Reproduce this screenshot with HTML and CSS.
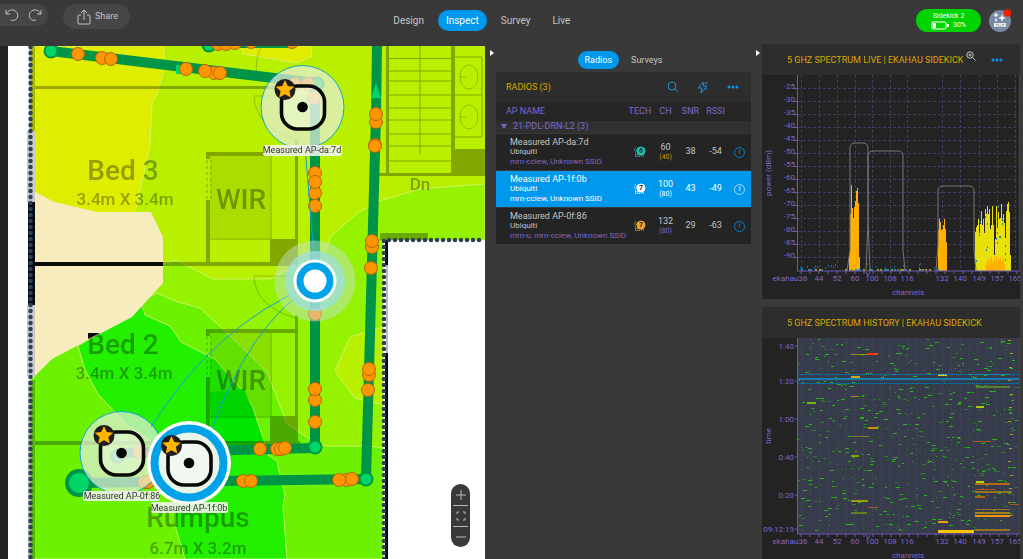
FILE: index.html
```html
<!DOCTYPE html>
<html lang="en">
<head>
<meta charset="utf-8">
<title>Inspect</title>
<link rel="stylesheet" href="styles.css">
</head>
<body>
<header class="topbar">
  <div class="tools">
    <div class="history">
      <button class="icon-btn" aria-label="Undo"><svg width="14" height="14" viewBox="0 0 14 14"><path d="M1 2v4h4M1.300 5.800C3 2.500 6 1.200 9 2.200c5 2 5 9 0 10-1 .3-2 .2-3-.2"/></svg></button>
      <button class="icon-btn" aria-label="Redo"><svg width="14" height="14" viewBox="0 0 14 14"><path d="M13 2v4H9M12.700 5.800C11 2.500 8 1.200 5 2.200c-5 2-5 9 0 10 1 .3 2 .2 3-.2"/></svg></button>
    </div>
    <button class="share"><svg width="14" height="16" viewBox="0 0 14 16"><path d="M4 6H2q-1 0-1 1v7q0 1 1 1h10q1 0 1-1V7q0-1-1-1h-2M7 11V1M4 4l3-3 3 3"/></svg>Share</button>
  </div>
  <nav class="modes">
    <a href="#design">Design</a>
    <a href="#inspect" class="active">Inspect</a>
    <a href="#survey">Survey</a>
    <a href="#live">Live</a>
  </nav>
  <div class="status">
    <button class="sidekick"><span>Sidekick 2</span><span class="charge"><svg width="18" height="9" viewBox="0 0 18 9"><rect x="1" y="1" width="14" height="7" rx="1" fill="none" stroke="#fff"/><path d="M2 2h3v5H2zM16 3h2v3h-2z" fill="#fff"/></svg>30%</span></button>
    <button class="avatar" aria-label="Account"><svg width="24" height="24" viewBox="0 0 24 24"><circle cx="12" cy="13" r="11" fill="#7889a3"/><path d="M8 4l.8 2.200 2.200.8-2.200.8L8 10l-.8-2.200L5 7l2.200-.8zM14 6l1 3 3 1-3 1-1 3-1-3-3-1 3-1zM8 10l.6 1.400 1.400.6-1.400.6L8 14l-.6-1.400L6 12l1.400-.6z" fill="#fff"/><path d="M6 15h12v4H6z" fill="#e8e8e8"/><path d="M8 16.500h3M14 16.500h3M8 18h8" stroke="#9aa5b3" stroke-width=".7"/><circle cx="19.500" cy="5" r="3.700" fill="#f51c00"/></svg></button>
  </div>
</header>
<main class="workspace">
  <section class="map" aria-label="Floor plan">
    <svg class="plan" viewBox="8 46 477 513" preserveAspectRatio="xMinYMin slice">
      <defs>
        <g id="ap">
          <rect x="-21" y="-21" width="43" height="43" rx="16" fill="#fff" fill-opacity=".35" stroke="#080808" stroke-width="3.600"/>
          <circle r="5.300" fill="#050505"/>
          <circle cx="-17.500" cy="-17.500" r="10.500" fill="#201d1c"/>
          <path fill="#ffb400" d="M-17.500-27l2.800 6 6.500.7-4.900 4.400 1.400 6.500-5.800-3.300-5.800 3.300 1.400-6.500-4.900-4.400 6.500-.7z"/>
        </g>
      </defs>
      <rect x="8" y="46" width="477" height="513" fill="#fff"/>
      <path fill="#b9f000" d="M31 46H485V240H383V559H31z"/>
      <path class="zone" fill="#dfee00" d="M31 46H164V70L158 92 152 103 150 146 135 213H97L54 202 31 190z"/>
      <path class="zone" fill="#dfee00" d="M240 46l3 8 53 9 15-6 1-11z"/>
      <path class="zone" fill="#95f200" d="M163 264l13-4 37 19h57l55-27 6-16 27-23 21-12 41-12 65-5V240H383V559H31V380z"/>
      <path class="zone" fill="#b9f000" d="M383 327l-33 10-15 34 20 27 28 7z"/>
      <path class="zone" fill="#6cf200" d="M157 293l18 8 25 7 40 37 27 27 20 52 23 15 15 7h45l13 2V559H31V360z"/>
      <path class="zone" fill="#23f000" d="M142 306l3 9 25 11 11 16 34 17 25 29 13 19 12 38 3 10 9 6 3 14 5 20-2 11 4 53H185l-9-30-1-30-25-59-23-15-29-31-13-24-7-24z"/>
      <path fill="#00e600" d="M210 392l34-3 8 20 12 33-52 2z"/>
      <path fill="#f6ecbe" d="M31 190l23 12 43 10h54l12 25v46l-31 34-80 42-21 21z"/>
      <g class="floor">
        <path d="M29 46h6v85h-6zM28 380h7v179h-7z" opacity=".8"/>
        <path d="M35 86h244v3H35zM163 262h130v4H163zM35 441h265v4H35zM206 152h89v4h-89zM206 152h4v7h-4zM206 200h4v63h-4zM295 140h3v125h-3zM206 329h90v4h-90zM206 329h4v7h-4zM206 377h4v66h-4zM295 315h3v128h-3zM386 46h3v128h-3zM451 46h4v128h-4zM378 173h107v3H378z"/>
        <path d="M270 239h28v25h-28zM270 416h28v26h-28zM452 149h33v25h-33zM380 233h48v7h-48z"/>
        <path fill="none" stroke="#000" d="M208 239h62M208 417h62M389 58.500h62M389 71h62M389 81h62M389 95h62M389 108h62M389 120h62M389 134h62M389 146h62M389 161h62M420 46v108M454 57h28v80h-28zM454 95h28M271 156v108M271 333v109"/>
        <path fill="none" stroke="#000" stroke-dasharray="3 3" d="M207 160v40M207 336v40M211 160v40M211 336v40"/>
        <path d="M210 156h60v82h-60zM210 333h60v83h-60z" opacity=".25"/>
        <g fill="none" stroke="#000" stroke-width="1" opacity=".7"><ellipse cx="469" cy="77" rx="9" ry="12"/><ellipse cx="469" cy="117" rx="9" ry="12"/><path d="M459 77h8M459 117h8M254 96h42M254 97q2 30 42 43M254 276h42M254 277q2 30 42 41M262 46q-8 12-5 30"/></g>
      </g>
      <path d="M35 262h128v4H35zM28 202h7v103h-7zM88 333h12l-12 6z" fill="#080b0d"/>
      <path d="M27 131h8v71h-8zM27 305h8v71h-8z" fill="#c8c8c8"/>
      <path d="M385 240h3v25h-3zM385 353h3v206h-3z" fill="#080b0d"/><path d="M386 265h2v88h-2z" fill="#bbb"/>
      <path class="beads" d="M30.500 47V559M384 559V240H485"/>
      <g class="rooms">
        <text x="123" y="180" class="room">Bed 3</text><text x="125" y="205" class="size">3.4m X 3.4m</text>
        <text x="123" y="354" class="room">Bed 2</text><text x="124" y="379" class="size">3.4m X 3.4m</text>
        <text x="241" y="209" class="room">WIR</text><text x="241" y="390" class="room">WIR</text>
        <text x="198" y="527" class="room">Rumpus</text><text x="198" y="554" class="size">6.7m X 3.2m</text>
        <text x="420" y="190" class="size">Dn</text>
      </g>
      <path class="track" d="M51 51L315 83V448L122 453M210 43H295M377 46l-1 70-10 363-287 4"/>
      <g class="node" id="nodes"></g>
      <path d="M176 65h10v9h-10zM376 83l5 15h-10z" fill="#00d568"/>
      <g id="points" class="points"></g>
      <circle cx="79" cy="483" r="14" fill="#009447"/><circle cx="79" cy="483" r="10" fill="#00d568"/>
      <g class="range"><circle cx="302.500" cy="107" r="41.500"/><circle cx="121.500" cy="453" r="41.500"/></g>
      <path class="link" d="M310 286Q215 325 151 427M310 287Q250 325 211 431M305 146L315 270"/>
      <g fill="#c8dfe0"><circle cx="315" cy="281" r="40.500" opacity=".45"/><circle cx="315" cy="281" r="30" fill="#9fdfe0" opacity=".75"/></g>
      <circle cx="315" cy="281" r="21.500" fill="#fff"/><circle cx="315" cy="281" r="15" fill="#fff" stroke="#00a2e8" stroke-width="7"/>
      <circle cx="189" cy="463" r="42" fill="#fff"/><circle cx="189" cy="463" r="34.500" fill="#e9f5ea" stroke="#00a2e8" stroke-width="8"/>
      <use href="#ap" x="302.500" y="107"/><use href="#ap" x="121.500" y="453"/><use href="#ap" x="189" y="463"/>
      <g class="tag"><rect x="263" y="145" width="79" height="11" rx="2"/><text x="302" y="153">Measured AP-da:7d</text><rect x="83" y="491" width="77" height="10" rx="2"/><text x="122" y="499">Measured AP-0f:86</text><rect x="151" y="502" width="77" height="11" rx="2"/><text x="189" y="511">Measured AP-1f:0b</text></g>
    </svg>
    <div class="zoom">
      <button aria-label="Zoom in"><svg width="12" height="12" viewBox="0 0 12 12"><path d="M6 1v10M1 6h10"/></svg></button>
      <button aria-label="Fit"><svg width="12" height="12" viewBox="0 0 12 12"><path d="M2 4V2h2M8 2h2v2M10 8v2H8M4 10H2V8"/></svg></button>
      <button aria-label="Zoom out"><svg width="12" height="12" viewBox="0 0 12 12"><path d="M1 6h10"/></svg></button>
    </div>
  </section>
  <button class="fold" aria-label="Collapse radios"></button>
  <section class="radios">
    <div class="tabs"><button class="active">Radios</button><button>Surveys</button></div>
    <div class="card-head">
      <h2>RADIOS (3)</h2>
      <div class="actions">
        <button class="icon-btn" aria-label="Search"><svg width="12" height="12" viewBox="0 0 12 12"><circle cx="5" cy="5" r="4"/><path d="M8 8l3 3"/></svg></button>
        <button class="icon-btn" aria-label="Auto"><svg width="12" height="13" viewBox="0 0 12 13"><path d="M6 1L1 7h4l-1 5 6-7H6l1-4M8 2h3M8 8h2"/></svg></button>
        <button class="icon-btn more" aria-label="More"><svg width="12" height="4" viewBox="0 0 12 4"><circle cx="2" cy="2" r="1.500"/><circle cx="6" cy="2" r="1.500"/><circle cx="10" cy="2" r="1.500"/></svg></button>
      </div>
    </div>
    <table>
      <colgroup><col><col class="c-tech"><col class="c-num"><col class="c-num"><col class="c-num"><col class="c-info"></colgroup>
      <thead><tr><th class="name">AP NAME</th><th>TECH</th><th>CH</th><th>SNR</th><th>RSSI</th><th></th></tr></thead>
      <tbody>
        <tr class="group"><td colspan="6"><span class="caret"></span>21-PDL-DRN-L2 (3)</td></tr>
        <tr><td class="name"><b>Measured AP-da:7d</b><span>Ubiquiti</span><em>mrn-cciew, Unknown SSID</em></td><td><svg class="tech teal" viewBox="0 0 12 12"><path d="M1 2h2M0 4h3M1 6h3M1 8h6M1 10h10M2 8v3M5 8v3M8 9v2"/><circle cx="7" cy="5" r="4"/><text x="7" y="7">6</text></svg></td><td>60<small class="amber">(40)</small></td><td>38</td><td>-54</td><td><button class="info" aria-label="Details">i</button></td></tr>
        <tr class="selected"><td class="name"><b>Measured AP-1f:0b</b><span>Ubiquiti</span><em>mrn-cciew, Unknown SSID</em></td><td><svg class="tech white" viewBox="0 0 12 12"><path d="M1 2h2M0 4h3M1 6h3M1 8h6M1 10h10M2 8v3M5 8v3M8 9v2"/><circle cx="7" cy="5" r="4"/><text x="7" y="7">7</text></svg></td><td>100<small>(80)</small></td><td>43</td><td>-49</td><td><button class="info" aria-label="Details">i</button></td></tr>
        <tr><td class="name"><b>Measured AP-0f:86</b><span>Ubiquiti</span><em>mrn-u, mrn-cciew, Unknown SSID</em></td><td><svg class="tech gold" viewBox="0 0 12 12"><path d="M1 2h2M0 4h3M1 6h3M1 8h6M1 10h10M2 8v3M5 8v3M8 9v2"/><circle cx="7" cy="5" r="4"/><text x="7" y="7">7</text></svg></td><td>132<small>(80)</small></td><td>29</td><td>-63</td><td><button class="info" aria-label="Details">i</button></td></tr>
      </tbody>
    </table>
  </section>
  <button class="fold" aria-label="Collapse charts"></button>
  <section class="charts">
    <article class="chart">
      <div class="chart-head"><h2>5 GHZ SPECTRUM LIVE | EKAHAU SIDEKICK</h2>
        <button class="icon-btn grey" aria-label="Magnify"><svg width="10" height="10" viewBox="0 0 10 10"><circle cx="4" cy="4" r="3.200"/><path d="M6.500 6.500L9.500 9.500M2.500 4h3M4 2.500v3"/></svg></button>
        <button class="icon-btn more" aria-label="More"><svg width="12" height="4" viewBox="0 0 12 4"><circle cx="2" cy="2" r="1.500"/><circle cx="6" cy="2" r="1.500"/><circle cx="10" cy="2" r="1.500"/></svg></button>
      </div>
      <svg id="live" viewBox="762 75 258 224"></svg>
    </article>
    <article class="chart">
      <div class="chart-head"><h2>5 GHZ SPECTRUM HISTORY | EKAHAU SIDEKICK</h2></div>
      <svg id="past" viewBox="762 338 258 224"></svg>
    </article>
  </section>
</main>
<script src="charts.js"></script>
</body>
</html>
```
FILE: styles.css
```css
* { box-sizing: border-box; }
body { margin: 0; height: 100vh; display: flex; flex-direction: column; overflow: hidden; background: #393939; color: #c4c4c4; font: 9px/11px Roboto, sans-serif; }
button { padding: 0; border: 0; background: none; color: inherit; font: inherit; }
h2 { margin: 0; font: 9px/12px Roboto, sans-serif; color: #dba800; }
svg { display: block; }
.topbar { flex: none; height: 44px; display: grid; grid-template-columns: 13fr auto 15fr; }
.tools { display: flex; gap: 15px; padding-top: 4px; align-items: flex-start; }
.history { display: flex; gap: 9px; height: 22px; padding: 0 6px 0 5px; border-radius: 0 11px 11px 0; background: #464646; align-items: center; }
.icon-btn svg, .share svg, .zoom svg { fill: none; stroke: currentColor; stroke-width: 1; }
.share { display: flex; align-items: center; gap: 4px; height: 25px; padding: 0 12px 0 14px; border-radius: 13px; background: #464646; }
.modes { display: flex; gap: 6px; padding-top: 10px; font-size: 10px; line-height: 21px; }
.modes a { height: 21px; padding: 0 8px; border-radius: 11px; color: inherit; text-decoration: none; }
.modes .active, .tabs .active { background: #0098ec; color: #fff; }
.status { display: flex; justify-content: flex-end; gap: 7px; padding: 9px 11px 0 0; align-items: flex-start; }
.sidekick { width: 65px; height: 23px; border-radius: 12px; background: #00d400; color: #fff; font-size: 7px; line-height: 9px; }
.sidekick span { display: block; }
.sidekick .charge { display: flex; justify-content: center; align-items: center; gap: 4px; }
.avatar { margin-top: -1px; }
.workspace { flex: 1; min-height: 0; display: grid; grid-template-columns: minmax(0, 1fr) 11px 255px 11px 258px; padding-right: 3px; }
.map { position: relative; margin-top: 2px; border-left: 8px solid #232323; overflow: hidden; background: #fff; }
.plan { width: 100%; height: 100%; }
.zone { stroke: #d9f27a; stroke-width: 1; stroke-opacity: .8; }
.floor { opacity: .3; }
.beads { fill: none; stroke: #2d4056; stroke-width: 4.500; stroke-linecap: round; stroke-dasharray: 0 6; }
.rooms { font-family: Roboto, sans-serif; font-weight: 500; text-anchor: middle; opacity: .33; }
.room { font-size: 28px; }
.size { font-size: 17px; }
.track { fill: none; stroke: #009447; stroke-width: 10; }
.node { fill: #00d568; stroke: #009447; stroke-width: 2; }
.points { fill: #ff9600; stroke: #b5650f; stroke-width: 1; }
.range { fill: #e5eedc; fill-opacity: .72; stroke: #12a5cd; stroke-width: 1; }
.link { fill: none; stroke: #139ee0; stroke-width: 1; }
.tag { font: 9px Roboto, sans-serif; text-anchor: middle; fill: #333; }
.tag rect { fill: #f3f3ee; fill-opacity: .88; }
.zoom { position: absolute; right: 15px; bottom: 12px; width: 19px; display: flex; flex-direction: column; padding: 0 2px; border-radius: 10px; background: #393939; color: #bbb; }
.zoom button { height: 21px; display: flex; align-items: center; justify-content: center; }
.zoom button + button { border-top: 1px solid #bbb; }
.fold { align-self: start; margin: 6px 0 0 5px; border-left: 4px solid #fff; border-top: 3px solid transparent; border-bottom: 3px solid transparent; justify-self: start; }
.radios { display: flex; flex-direction: column; min-width: 0; overflow: hidden; }
.tabs { display: flex; justify-content: center; gap: 5px; padding: 7px 0 3px; }
.tabs button { height: 18px; padding: 0 7px; border-radius: 9px; }
.card-head { height: 30px; padding: 0 12px 0 10px; display: flex; justify-content: space-between; align-items: center; background: #2d2d2d; }
.actions { display: flex; gap: 18px; align-items: center; color: #1594df; }
.icon-btn.more { color: #0098ec; }
.icon-btn.more svg { fill: currentColor; stroke: none; }
table { width: 100%; table-layout: fixed; border-collapse: collapse; }
.c-tech { width: 26px; }
.c-num { width: 25px; }
.c-info { width: 23px; }
th { height: 19px; padding: 0; font-weight: 400; color: #7e66cb; background: #262626; }
th.name { padding-left: 10px; text-align: left; }
td { height: 37px; padding: 0; text-align: center; background: #242424; border-bottom: 1px solid #393939; }
.group td { height: 12px; padding-left: 5px; text-align: left; line-height: 11px; background: #303030; color: #7e66cb; }
.caret { display: inline-block; margin-right: 6px; border-top: 5px solid #7e66cb; border-left: 3px solid transparent; border-right: 3px solid transparent; }
td.name { padding-left: 14px; text-align: left; font-size: 8px; line-height: 10px; white-space: nowrap; }
.name b, .name span, .name em, small { display: block; font-weight: 400; font-style: normal; }
.name b { font-size: 9px; }
.name em, small { color: #7e66cb; }
small { font-size: 7px; line-height: 8px; }
small.amber { color: #c99700; }
.selected td { background: #0098ec; }
.selected td, .selected em, .selected small { color: #fff; }
.tech { width: 12px; height: 12px; margin: auto; stroke: currentColor; fill: currentColor; }
.tech path { stroke-dasharray: 1 1; }
.tech text { font: 700 7px Roboto, sans-serif; text-anchor: middle; stroke: none; fill: #222; }
.teal { color: #18c5b0; }
.white { color: #fff; }
.gold { color: #eea52a; }
.info { width: 11px; height: 11px; border: 1px solid #087fc5; border-radius: 50%; color: #1594df; font-size: 7px; line-height: 9px; }
.selected .info { border-color: #9fdcff; color: #fff; }
.charts { display: flex; flex-direction: column; gap: 8px; min-width: 0; overflow: hidden; }
.chart { flex: none; background: #232323; }
.chart-head { display: flex; align-items: center; height: 31px; padding: 0 17px 0 25px; background: #2d2d2d; }
.chart-head h2 { flex: 1; white-space: nowrap; }
.chart-head .more { margin-left: 15px; }
.grey { padding-bottom: 8px; }
.chart > svg { width: 100%; }
.chart > svg text { font: 8px Roboto, sans-serif; fill: #7e66cb; text-anchor: middle; }
.chart > svg .end { text-anchor: end; }
```
FILE: charts.js
```js
let seed = 7;
const rand = () => (seed = (seed * 16807) % 2147483647) / 2147483647;
const rect = (x, y, w, h, c) => `<rect x="${x}" y="${y}" width="${w}" height="${h}" fill="${c}"/>`;
const line = (x1, y1, x2, y2, c, dash) => `<path d="M${x1} ${y1}L${x2} ${y2}" fill="none" stroke="${c}"${dash ? ` stroke-dasharray="${dash}"` : ''}/>`;
const text = (x, y, t, c = '') => `<text x="${x}" y="${y}" class="${c}">${t}</text>`;

// Survey points on the floor plan
const points = [[78,54],[102,58],[111,59],[186,69],[214,73],[205,71],[220,73],[218,44],[226,44],[235,43],[251,42],[292,42],
  [295,84],[308,84],[314,98],[315,173],[315,193],[315,182],[315,206],[315,314],[315,400],[315,389],[315,422],
  [376,122],[376,114],[375,145],[375,146],[372,247],[372,241],[371,268],[369,375],[369,369],[368,390],
  [260,449],[277,449],[281,449],[285,448],[243,481],[251,481],[347,480],[339,480],[352,479],[140,452],[145,482],[148,482]];
document.getElementById('points').innerHTML = points.map(([x, y]) => `<circle cx="${x}" cy="${y}" r="6.5"/>`).join('');
document.getElementById('nodes').innerHTML = [[51,51],[209,45],[317,84],[315,447],[366,479],[118,456]].map(([x, y]) => `<circle cx="${x}" cy="${y}" r="6.5"/>`).join('');

const channels = [[819,'44'],[837,'52'],[855,'60'],[872,'100'],[890,'108'],[907,'116'],[942,'132'],[960,'140'],[979,'149'],[997,'157'],[1015,'165']];
const axis = '#6c57b2';
const xAxis = (y) => {
  let s = line(797, y, 1020, y, axis) + text(790, y + 10, 'ekahau36');
  for (let x = 801; x < 1020; x += 9) s += line(x, y, x, y + 3, axis);
  channels.forEach(([x, t]) => { s += text(x, y + 10, t); });
  return s + line(866, y + 1, 868, y + 5, axis) + line(868, y + 5, 870, y + 1, axis) + text(908, y + 24, 'channels');
};

// Live spectrum
let live = '';
for (let i = 0; i < 14; i++) {
  const y = 88.5 + i * 13;
  live += line(798, y, 1020, y, '#423b60', '3 2') + line(794, y, 798, y, axis) + text(795, y, -25 - i * 5, 'end');
}
[801, ...channels.map((c) => c[0])].forEach((x) => { live += line(x + .5, 75, x + .5, 271, '#423b60', '3 2'); });
const bars = (x, step, tops, c) => tops.forEach((y, i) => { live += rect(x + i * step, y, step, 271 - y, c); });
bars(850, 1, [214,185,208,218,207,201,191,188,203], '#ffb000');
live += rect(849, 252, 1, 19, '#ffb000') + rect(859, 257, 1, 14, '#ffb000');
bars(938, 1, [230,219,222,230,229,225,219,229,242], '#ffb000');
bars(975, 1, [232,227,225,219,233,224,211,225,219,233,209,214,206,214,209,229,225,206,225,255,239,206,228,212,219,218,204,221,214,223,238,211,204,202,212,255], '#e8df0b');
bars(986, 1, [264,261,258,265,260,257,263,261,257,260,256,263,258,260,257,263,260,258,264], '#ffb000');
for (let i = 0; i < 18; i++) live += rect(976 + Math.floor(rand() * 32), 203 + Math.floor(rand() * 62), 1, 2, '#168ea5');
for (let i = 0; i < 40; i++) live += rect(800 + Math.floor(rand() * 138), 269, 2, 2, rand() > .3 ? '#aaa500' : '#168ea5');
for (let i = 0; i < 20; i++) live += rect(800 + Math.floor(rand() * 135), 263 + Math.floor(rand() * 5), 1, 2, '#176e98');
live += '<path fill="none" stroke="#777" d="M847 271L850 250V148Q850 143 855 143H863Q868 143 868 148V220L870 271M866 271L868 220V156Q868 151 873 151H898Q903 151 903 156V250L905 271M936 271L938 245V191Q938 186 943 186H969Q974 186 974 191V250L976 271"/>';
live += line(797.5, 75, 797.5, 271, axis) + line(1019.5, 75, 1019.5, 271, '#493e74') + xAxis(271);
live += '<g transform="translate(771 173) rotate(-90)"><text>power (dBm)</text></g>';
document.getElementById('live').innerHTML = live;

// Spectrum history
let past = rect(798, 338, 222, 196, '#363c49');
for (let x = 802; x < 1020; x += 8.8) past += line(x, 338, x, 534, '#454366', '3 2');
for (let i = 0; i < 600; i++) past += rect(798 + Math.floor(rand() * 219), 339 + Math.floor(rand() * 193), 1 + Math.floor(rand() * 4), 1, rand() > .4 ? '#26b416' : '#2b8228');
[[851,354,18,'#a38b0c'],[868,353,10,'#ff3b12'],[851,376,9,'#d2a900'],[851,396,8,'#a18c0a'],[807,402,9,'#76b60b'],[868,427,10,'#d28c0b'],[851,436,18,'#81762b'],[851,455,8,'#879e0b'],[851,500,17,'#a09a0d'],[868,507,10,'#ad5922'],[851,512,16,'#687c27'],[938,374,9,'#e1cb00'],[975,374,35,'#717d28'],[976,386,34,'#5b7f2a'],[976,406,8,'#abc900'],[973,441,18,'#a65a1f'],[976,481,8,'#a6dc00'],[975,483,35,'#b26b12'],[975,489,20,'#b9531c'],[975,491,37,'#977421'],[975,496,10,'#aa6613'],[975,509,35,'#977421'],[975,512,35,'#a58118'],[975,515,35,'#ed960e'],[1010,504,10,'#9b5827'],[938,521,10,'#eca20d'],[975,529,35,'#977421']].forEach(([x, y, w, c], i) => { past += rect(x, y, w, i % 3 ? 2 : 1, c); });
past += rect(938, 530, 36, 3, '#ffc400');
for (let i = 0; i < 14; i++) past += rect(1008 + (i * 5) % 3, 340 + Math.floor(i * 13.5), 3, 1, '#b79a18');
past += rect(798, 378, 222, 2, '#137db1') + line(798, 374.5, 1020, 374.5, '#137db1', '1 1') + line(798, 383.5, 1020, 383.5, '#137db1', '1 1');
[[346,'1:40'],[381,'1:20'],[419,'1:00'],[457,'0:40'],[495,'0:20'],[529,'09:12:19']].forEach(([y, t]) => { past += text(794, y + 3, t, 'end') + line(795, y, 798, y, axis); });
past += line(797.5, 338, 797.5, 534, axis) + line(1019.5, 338, 1019.5, 534, '#493e74') + xAxis(534);
past += '<g transform="translate(771 436) rotate(-90)"><text>time</text></g>';
document.getElementById('past').innerHTML = past;
```
